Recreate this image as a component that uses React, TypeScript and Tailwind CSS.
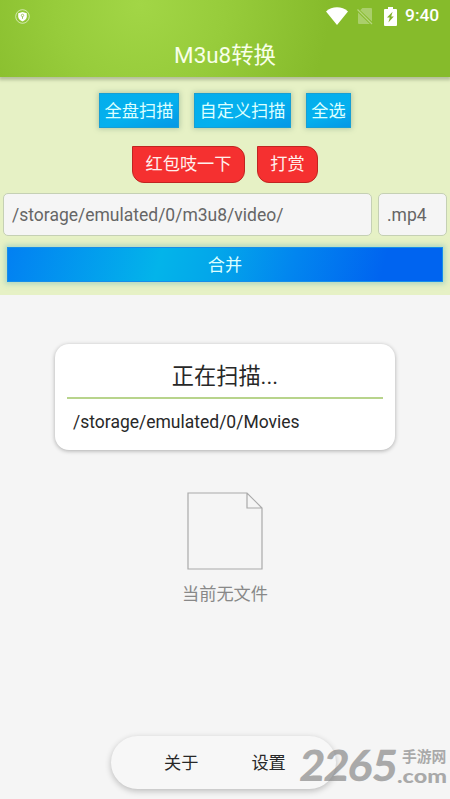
import React, { useState } from 'react';

const scanActions = [
  { label: '全盘扫描', width: 'w-20' },
  { label: '自定义扫描', width: 'w-[97px]' },
  { label: '全选', width: 'w-[45px]' },
];

const rewardActions = [
  { label: '红包吱一下', width: 'w-[113px]' },
  { label: '打赏', width: 'w-[61px]' },
];

function StatusBar() {
  return (
    <div className="flex h-8 items-center pl-[15px] pr-[10px] text-white">
      <svg className="h-[15px] w-[15px]" viewBox="0 0 15 15" fill="none">
        <circle cx="7.5" cy="7.5" r="6.8" stroke="currentColor" strokeWidth="0.8" strokeOpacity="0.75" />
        <path d="M7.5 3 11.8 4.2v3.2c0 2.2-1.8 3.8-4.3 5-2.5-1.2-4.3-2.8-4.3-5V4.2Z" fill="currentColor" />
        <circle cx="7.5" cy="6.4" r="1.2" stroke="#86b33a" strokeWidth="0.7" />
        <path d="M7.5 7.6v2.2" stroke="#86b33a" strokeWidth="0.8" />
      </svg>
      <div className="ml-auto flex items-center">
        <svg className="h-[18px] w-[22px]" viewBox="0 0 22 18" fill="currentColor">
          <path d="M0 4.4C6-1 16-1 22 4.4L11 18Z" />
        </svg>
        <svg className="ml-[9px] h-[17px] w-4" viewBox="0 0 16 17" fill="none">
          <path d="M5.4 0H14q1 0 1 1v12.6L3.2 2.2ZM1 4.4 12.8 16H2q-1 0-1-1Z" fill="#fff" fillOpacity="0.3" />
          <path d="m.5 1.5 14.5 14.5" stroke="#fff" strokeOpacity="0.4" strokeWidth="1.2" />
        </svg>
        <svg className="ml-[11px] h-[19px] w-[13px]" viewBox="0 0 13 19">
          <path d="M4 0h5v2h3q1 0 1 1v15q0 1-1 1H1q-1 0-1-1V3q0-1 1-1h3Z" fill="currentColor" />
          <path d="M8.6 4.8 3 10.4h2.8L4.4 15.6l5.4-6.2H7.2Z" fill="#83b02a" />
        </svg>
        <span className="ml-[8px] w-[35px] whitespace-nowrap text-[17.4px] font-medium leading-none">9:40</span>
      </div>
    </div>
  );
}

export default function App() {
  const [path, setPath] = useState('/storage/emulated/0/m3u8/video/');
  const [extension, setExtension] = useState('.mp4');

  return (
    <div className="relative flex h-[799px] w-[450px] flex-col overflow-hidden bg-[#f5f5f5] font-[Roboto,'Noto_Sans_CJK_SC',sans-serif] text-[17px]">
      <header className="relative z-10 h-[77px] shrink-0 bg-[radial-gradient(circle_190px_at_140px_4px,#a2d646_0%,#97cc3b_45%,#86bb2b_100%)] shadow-[0_2px_3px_1px_rgba(110,120,90,0.4)]">
        <StatusBar />
        <h1 className="mt-[7px] text-center text-[22.4px] leading-[32px] text-[#f8ffe9]">M3u8转换</h1>
      </header>

      <section className="h-[218px] shrink-0 bg-[#e6f1c5] pt-4">
        <div className="ml-[99px] flex gap-[15px]">
          {scanActions.map(action => (
            <button
              key={action.label}
              className={`${action.width} h-[35px] whitespace-nowrap border border-[#169fd5] bg-[linear-gradient(160deg,#04aeec_0%,#04b0ee_55%,#0497e6_100%)] text-[17.2px] text-[#dcffff] shadow-[0_0_5px_1px_rgba(90,130,110,0.35)]`}
            >
              <span className="relative top-px">{action.label}</span>
            </button>
          ))}
        </div>

        <div className="ml-[132px] mt-[18px] flex gap-3">
          {rewardActions.map(action => (
            <button
              key={action.label}
              className={`${action.width} h-[37px] whitespace-nowrap rounded-[12px] rounded-tl-none border border-[#c02521] bg-[#f53030] text-[17.2px] text-[#fff0ed]`}
            >
              {action.label}
            </button>
          ))}
        </div>

        <div className="mt-[10px] flex gap-[6px] px-[3px]">
          <input
            value={path}
            onChange={e => setPath(e.target.value)}
            className="h-[43px] w-[369px] rounded-[5px] border border-[#c5d0b4] bg-[#f5f5f5] px-2 text-[17.5px] text-[#666] outline-none"
          />
          <input
            value={extension}
            onChange={e => setExtension(e.target.value)}
            className="h-[43px] w-[69px] rounded-[5px] border border-[#c5d0b4] bg-[#f5f5f5] px-2 text-[17.5px] text-[#666] outline-none"
          />
        </div>

        <button className="mx-[7px] mt-[11px] block h-[35px] w-[436px] border border-[#168ee8] bg-[linear-gradient(105deg,#0280f2_0%,#03b4ea_35%,#03a6ea_48%,#0286ef_65%,#0064f0_86%,#0064f0_100%)] text-[17.2px] text-[#dcffff] shadow-[0_0_5px_2px_rgba(120,190,190,0.5)]">
          <span className="relative top-px">合并</span>
        </button>
      </section>

      <main className="flex flex-1 flex-col items-center">
        <div className="mt-[49px] h-[106px] w-[340px] rounded-[14px] bg-white px-3 text-[#282828] shadow-[0_1px_4px_rgba(0,0,0,0.3)]">
          <h2 className="h-[55px] border-b-2 border-[#b8d48c] pt-[15px] text-center text-[22.2px] leading-[35px]">正在扫描...</h2>
          <p className="px-[6px] pt-[12px] text-[17.5px] leading-[22px]">/storage/emulated/0/Movies</p>
        </div>

        <svg className="mt-[42px] h-[78px] w-[76px]" viewBox="0 0 76 78" fill="none" stroke="#aaa" strokeWidth="1.2">
          <path d="M1 1h59l15 15v61H1ZM60 1v15h15" />
        </svg>
        <p className="mt-[11px] text-[17.2px] leading-[26px] text-[#888]">当前无文件</p>
      </main>

      <nav className="ml-[111px] mb-[10px] flex h-[53px] w-[225px] shrink-0 items-center gap-[53px] rounded-full bg-[#f7f7f7] pl-[53px] pt-[3px] text-[17.2px] text-[#282828] shadow-[0_2px_6px_rgba(0,0,0,0.24)]">
        <button>关于</button>
        <button>设置</button>
      </nav>

      <div className="pointer-events-none absolute left-[298px] top-[744px] flex text-[#828282] opacity-65">
        <span className="w-[99px] origin-bottom-left -skew-x-6 whitespace-nowrap font-[Lato,sans-serif] text-[43px] font-black leading-[42px] tracking-[-0.8px]">2265</span>
        <div className="w-[50px] whitespace-nowrap pt-[6px]">
          <div className="pl-[5px] text-[14.8px] font-semibold leading-[15px]">手游网</div>
          <div className="mt-[3px] origin-left scale-x-[1.2] font-[Lato,sans-serif] text-[19.5px] font-black leading-[15px]">.com</div>
        </div>
      </div>
    </div>
  );
}
